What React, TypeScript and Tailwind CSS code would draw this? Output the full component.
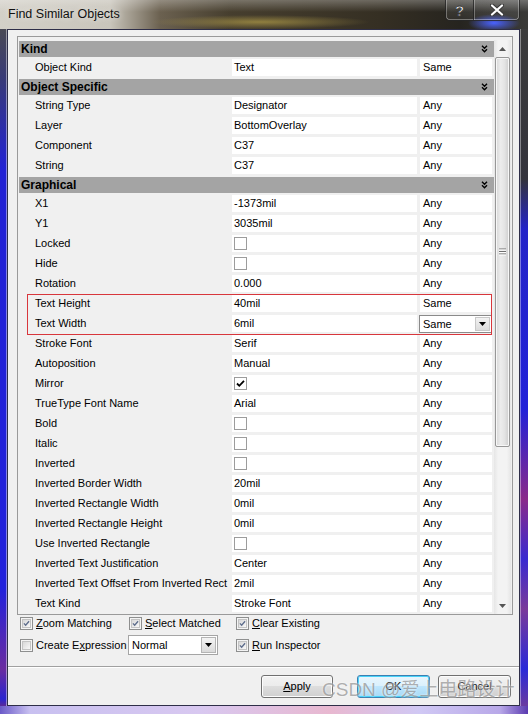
import React from "react";

type Row =
  | { t: "h"; label: string }
  | { t: "p"; label: string; value?: string; match: string; check?: boolean; combo?: boolean };

const rows: Row[] = [
  { t: "h", label: "Kind" },
  { t: "p", label: "Object Kind", value: "Text", match: "Same" },
  { t: "h", label: "Object Specific" },
  { t: "p", label: "String Type", value: "Designator", match: "Any" },
  { t: "p", label: "Layer", value: "BottomOverlay", match: "Any" },
  { t: "p", label: "Component", value: "C37", match: "Any" },
  { t: "p", label: "String", value: "C37", match: "Any" },
  { t: "h", label: "Graphical" },
  { t: "p", label: "X1", value: "-1373mil", match: "Any" },
  { t: "p", label: "Y1", value: "3035mil", match: "Any" },
  { t: "p", label: "Locked", check: false, match: "Any" },
  { t: "p", label: "Hide", check: false, match: "Any" },
  { t: "p", label: "Rotation", value: "0.000", match: "Any" },
  { t: "p", label: "Text Height", value: "40mil", match: "Same" },
  { t: "p", label: "Text Width", value: "6mil", match: "Same", combo: true },
  { t: "p", label: "Stroke Font", value: "Serif", match: "Any" },
  { t: "p", label: "Autoposition", value: "Manual", match: "Any" },
  { t: "p", label: "Mirror", check: true, match: "Any" },
  { t: "p", label: "TrueType Font Name", value: "Arial", match: "Any" },
  { t: "p", label: "Bold", check: false, match: "Any" },
  { t: "p", label: "Italic", check: false, match: "Any" },
  { t: "p", label: "Inverted", check: false, match: "Any" },
  { t: "p", label: "Inverted Border Width", value: "20mil", match: "Any" },
  { t: "p", label: "Inverted Rectangle Width", value: "0mil", match: "Any" },
  { t: "p", label: "Inverted Rectangle Height", value: "0mil", match: "Any" },
  { t: "p", label: "Use Inverted Rectangle", check: false, match: "Any" },
  { t: "p", label: "Inverted Text Justification", value: "Center", match: "Any" },
  { t: "p", label: "Inverted Text Offset From Inverted Rect", value: "2mil", match: "Any" },
  { t: "p", label: "Text Kind", value: "Stroke Font", match: "Any" },
];

function DownTri() {
  return (
    <svg width="7" height="4" viewBox="0 0 7 4">
      <path d="M0 0 L7 0 L3.5 4 Z" fill="#000" />
    </svg>
  );
}

function GridCheck({ checked }: { checked: boolean }) {
  return (
    <div className="w-[13px] h-[13px] border border-[#9c9c9c] bg-white flex items-center justify-center">
      {checked && (
        <svg width="11" height="11" viewBox="0 0 11 11">
          <path d="M2 5.5 L4.3 7.8 L9 2.8" stroke="#000" strokeWidth="1.8" fill="none" />
        </svg>
      )}
    </div>
  );
}

function WinCheck({ checked }: { checked: boolean }) {
  return (
    <div className="w-[13px] h-[13px] border border-[#8e8f8f] bg-[#f4f4f4] p-[1px] shrink-0">
      <div className="w-full h-full border border-[#c4c4c4] bg-[linear-gradient(135deg,#d8d8d8,#f8f8f8)] flex items-center justify-center">
        {checked && (
          <svg width="9" height="9" viewBox="0 0 9 9">
            <path d="M1.2 4.4 L3.4 6.8 L7.8 1.6" stroke="#5d6d8c" strokeWidth="1.7" fill="none" />
          </svg>
        )}
      </div>
    </div>
  );
}

function HeaderRow({ label }: { label: string }) {
  return (
    <div className="h-[18px] py-[1px]">
      <div className="h-[16px] bg-[#a4a4a4] flex items-center pl-[2px] pr-[6px]">
        <span className="font-bold text-[12px] leading-none">{label}</span>
        <svg className="ml-auto" width="7" height="8" viewBox="0 0 7 8">
          <path d="M1 0.8 L3.5 3.2 L6 0.8" stroke="#000" strokeWidth="1.4" fill="none" />
          <path d="M1 4.3 L3.5 6.7 L6 4.3" stroke="#000" strokeWidth="1.4" fill="none" />
        </svg>
      </div>
    </div>
  );
}

function PropRow({ r }: { r: Extract<Row, { t: "p" }> }) {
  return (
    <div className="h-[20px] flex pt-[1px]">
      <div className="w-[213px] h-[17px] pl-[16px] flex items-center whitespace-nowrap">{r.label}</div>
      <div className="w-[185px] h-[17px] bg-white pl-[2px] flex items-center">
        {r.check !== undefined ? <GridCheck checked={r.check} /> : r.value}
      </div>
      <div className="w-[3px]" />
      {r.combo ? (
        <div className="w-[73px] h-[18px] -ml-[1px] border border-[#8a8a8a] bg-white flex items-center">
          <span className="pl-[3px]">{r.match}</span>
          <div className="ml-auto mr-[1px] w-[15px] h-[14px] bg-[linear-gradient(180deg,#f2f2f2,#dcdcdc)] border border-[#c8c8c8] flex items-center justify-center">
            <DownTri />
          </div>
        </div>
      ) : (
        <div className="w-[72px] h-[17px] bg-white pl-[3px] flex items-center">{r.match}</div>
      )}
    </div>
  );
}

function Grid() {
  const out: React.ReactNode[] = [];
  for (let i = 0; i < rows.length; i++) {
    const r = rows[i];
    if (r.t === "h") {
      out.push(<HeaderRow key={i} label={r.label} />);
    } else if (r.label === "Text Height") {
      const r2 = rows[i + 1] as Extract<Row, { t: "p" }>;
      out.push(
        <div key={i} className="relative">
          <PropRow r={r} />
          <PropRow r={r2} />
          <div className="absolute left-[8px] right-[2px] top-0 bottom-[-1px] border border-[#d8363c] pointer-events-none" />
        </div>
      );
      i++;
    } else {
      out.push(<PropRow key={i} r={r} />);
    }
  }
  return <div className="w-[475px] pt-[3px] flex flex-col">{out}</div>;
}

function Scrollbar() {
  return (
    <div className="w-[17px] mt-[3px] flex flex-col bg-[linear-gradient(90deg,#e6e6e6,#f3f3f3_25%,#f3f3f3_75%,#e6e6e6)]">
      <div className="h-[17px] flex items-center justify-center">
        <svg width="7" height="4" viewBox="0 0 7 4">
          <path d="M0 4 L3.5 0 L7 4 Z" fill="#555" />
        </svg>
      </div>
      <div className="mx-[1px] h-[390px] rounded-[2px] border border-[#979797] bg-[linear-gradient(90deg,#d6d6d6,#ececec_35%,#e4e4e4_65%,#cdcdcd)] shadow-[inset_0_0_0_1px_#f7f7f7] flex items-center justify-center">
        <svg width="7" height="8" viewBox="0 0 7 8">
          <path d="M0 1 H7 M0 3.5 H7 M0 6 H7" stroke="#6f6f6f" strokeWidth="1" />
          <path d="M0 2 H7 M0 4.5 H7 M0 7 H7" stroke="#ffffff" strokeWidth="1" />
        </svg>
      </div>
      <div className="flex-1" />
      <div className="h-[17px] flex items-center justify-center">
        <svg width="7" height="4" viewBox="0 0 7 4">
          <path d="M0 0 L7 0 L3.5 4 Z" fill="#555" />
        </svg>
      </div>
    </div>
  );
}

function Button({ children, focused }: { children: React.ReactNode; focused?: boolean }) {
  return (
    <div
      className={
        "h-[23px] rounded-[3px] border flex items-center justify-center " +
        (focused
          ? "border-[#3c7fb1] bg-[linear-gradient(180deg,#eaf6fd_0%,#d9f0fc_50%,#bee6fd_50%,#a7d9f5_100%)] shadow-[inset_0_0_0_1px_#48d3f9]"
          : "border-[#707070] bg-[linear-gradient(180deg,#f2f2f2_0%,#ebebeb_50%,#dddddd_50%,#cfcfcf_100%)] shadow-[inset_0_0_0_1px_#fcfcfc]")
      }
    >
      {children}
    </div>
  );
}

export default function App() {
  return (
    <div className="relative w-[528px] h-[714px] overflow-hidden flex flex-col font-['Liberation_Sans',Arial,sans-serif] text-[11px] text-black bg-[#2424d0]">
      {/* Title bar */}
      <div className="h-[29px] flex items-start bg-[linear-gradient(180deg,rgba(255,255,255,0.28)_0px,rgba(255,255,255,0)_12px),radial-gradient(ellipse_26px_9px_at_494px_23px,#4a62ff_0%,rgba(60,80,255,0)_100%),radial-gradient(ellipse_110px_7px_at_260px_22px,rgba(170,150,70,0.75),rgba(170,150,70,0)),linear-gradient(90deg,#d3d0c8_0px,#c9c5bb_110px,#6b6150_160px,#463e2e_230px,#352f23_380px,#26241f_460px,#3a3a38_528px)]">
        <div className="pl-[8px] pt-[6px] text-[12.5px] leading-[16px] text-[#111] [text-shadow:0_0_6px_rgba(255,255,255,0.8)]">
          Find Similar Objects
        </div>
        <div className="ml-auto mr-[8px] flex h-[21px] rounded-b-[5px] border border-t-0 border-[rgba(30,30,30,0.75)] shadow-[inset_0_-1px_0_rgba(255,255,255,0.35),inset_1px_0_0_rgba(255,255,255,0.3),inset_-1px_0_0_rgba(255,255,255,0.3)] bg-[linear-gradient(180deg,rgba(255,255,255,0.12),rgba(255,255,255,0.05))]">
          <div className="w-[28px] h-full flex items-center justify-center border-r border-[rgba(30,30,30,0.7)] shadow-[1px_0_0_rgba(255,255,255,0.3)]">
            <span className="font-bold text-[15px] leading-none text-white [-webkit-text-stroke:0.8px_#3a3a3a]">?</span>
          </div>
          <div className="w-[45px] h-full flex items-center justify-center">
            <svg width="14" height="12" viewBox="0 0 14 12">
              <path d="M2 1.5 L12 10.5 M12 1.5 L2 10.5" stroke="#3a3a3a" strokeWidth="4.2" strokeLinecap="round" />
              <path d="M2 1.5 L12 10.5 M12 1.5 L2 10.5" stroke="#ffffff" strokeWidth="2.2" strokeLinecap="round" />
            </svg>
          </div>
        </div>
      </div>

      {/* Middle */}
      <div className="flex-1 flex">
        <div className="w-[7px] bg-[linear-gradient(180deg,#4a4a55_0px,#383a78_50px,#2222d4_140px,#2222dc_560px,#6a2ca0_640px,#2a24d0_670px,#5a2a98_677px)] shadow-[inset_-1px_0_0_rgba(255,255,255,0.45)]" />
        <div className="flex-1 flex flex-col bg-[#f0f0f0] border border-[#2e2e48]">
          <div className="pl-[9px] pr-[6px] pt-[6px] flex flex-col">
            <div className="flex border border-[#9a9a9a] bg-[#f0f0f0] pl-[1px] pr-[1px] h-[579px]">
              <Grid />
              <Scrollbar />
            </div>
            <div className="h-[16px] flex items-center pl-[3px]">
              <div className="w-[109px] flex items-center gap-[3px]">
                <WinCheck checked />
                <span><span className="underline">Z</span>oom Matching</span>
              </div>
              <div className="w-[107px] flex items-center gap-[3px]">
                <WinCheck checked />
                <span><span className="underline">S</span>elect Matched</span>
              </div>
              <div className="flex items-center gap-[3px]">
                <WinCheck checked />
                <span><span className="underline">C</span>lear Existing</span>
              </div>
            </div>
            <div className="mt-[3px] h-[22px] flex items-center pl-[3px]">
              <div className="w-[108px] flex items-center gap-[3px]">
                <WinCheck checked={false} />
                <span>Create E<span className="underline">x</span>pression</span>
              </div>
              <div className="w-[90px] h-[20px] border border-[#a5a5a5] bg-white flex items-center">
                <span className="pl-[3px]">Normal</span>
                <div className="ml-auto mr-[1px] w-[15px] h-[16px] border border-[#b5b5b5] bg-[linear-gradient(180deg,#f4f4f4,#dadada)] flex items-center justify-center">
                  <DownTri />
                </div>
              </div>
              <div className="ml-[18px] flex items-center gap-[3px]">
                <WinCheck checked />
                <span><span className="underline">R</span>un Inspector</span>
              </div>
            </div>
          </div>
          <div className="mt-[10px] h-[1px] bg-[#a0a0a0]" />
          <div className="h-[1px] bg-white" />
          <div className="pt-[7px] pr-[8px] flex justify-end">
            <div className="w-[72px]">
              <Button>
                <span><span className="underline">A</span>pply</span>
              </Button>
            </div>
            <div className="w-[73px] ml-[24px]">
              <Button focused>OK</Button>
            </div>
            <div className="w-[73px] ml-[8px]">
              <Button>Cancel</Button>
            </div>
          </div>
        </div>
        <div className="w-[8px] bg-[linear-gradient(180deg,#3c3c3c_0px,#34343c_150px,#2424c8_200px,#2222d8_380px,#8a2a8a_470px,#3a2ad0_530px,#7a3a9a_580px,#2a2ad8_640px,#6a3aa0_677px)] shadow-[inset_1px_0_0_rgba(255,255,255,0.4)]" />
      </div>

      {/* Bottom frame */}
      <div className="h-[8px] bg-[linear-gradient(90deg,#6a5ac8_0px,#c8c0f0_30px,#d8c8f0_200px,#e8b8d0_330px,#d0c8f4_420px,#b8a8e8_500px,#5a3ab0_528px)]" />

      {/* Watermark */}
      <div className="absolute left-[322px] top-[679px] text-[19px] leading-[22px] whitespace-nowrap text-[rgba(110,110,110,0.55)] [text-shadow:0_0_2px_rgba(255,255,255,0.9)] font-['Liberation_Sans','Noto_Sans_CJK_SC',sans-serif] pointer-events-none">
        CSDN @爱上电路设计
      </div>
    </div>
  );
}
